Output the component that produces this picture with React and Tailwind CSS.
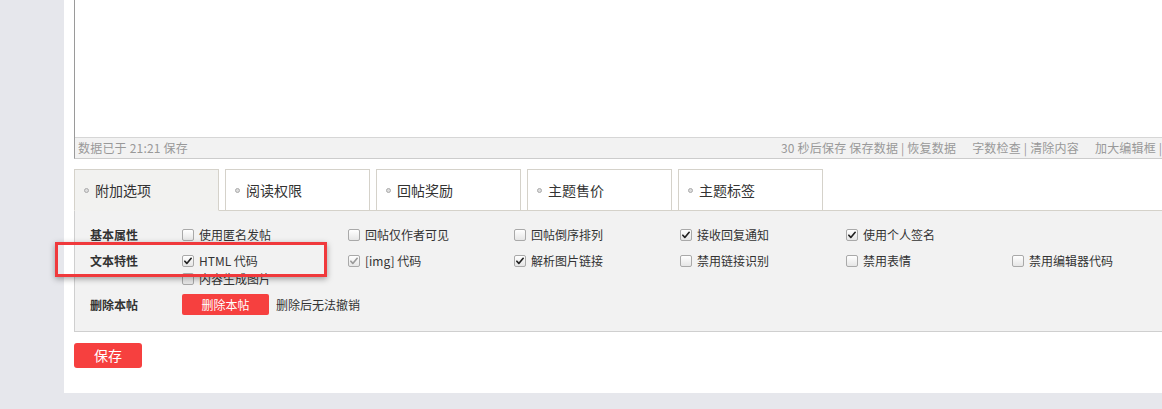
import React from 'react'

const tabs = ['附加选项', '阅读权限', '回帖奖励', '主题售价', '主题标签']

function Check({ checked, disabled }) {
  return (
    <span className="w-[12px] h-[12px] shrink-0 rounded-[2px] border border-[#a9a9a9] bg-gradient-to-b from-white to-[#e6e6e6] flex items-center justify-center mr-[5px]">
      {checked && (
        <svg viewBox="0 0 12 12" className="w-[10px] h-[10px]">
          <path d="M2.2 6.3l2.4 2.6L9.8 2.8" fill="none" stroke={disabled ? '#9a9a9a' : '#222'} strokeWidth="2" strokeLinecap="round" strokeLinejoin="round" />
        </svg>
      )}
    </span>
  )
}

function Opt({ text, checked, disabled }) {
  return (
    <label className="w-[166px] h-[18px] flex items-center text-[12px] text-[#333] leading-[18px]">
      <Check checked={checked} disabled={disabled} />
      <span>{text}</span>
    </label>
  )
}

export default function App() {
  return (
    <div className="w-[1162px] h-[409px] overflow-hidden bg-[#e6e7ec] relative font-['Noto_Sans_CJK_SC','Liberation_Sans',sans-serif]">
      <div className="ml-[64px] w-[1250px] h-[393px] bg-white pl-[10px]">
        {/* Editor */}
        <div className="w-[1200px] border-l border-r border-b border-l-[#9a9a9a] border-r-[#ccc] border-b-[#ccc]">
          <div className="h-[137px] bg-white"></div>
          <div className="h-[21px] bg-[#f2f2f2] border-t border-[#d6d6d6] flex items-center text-[12px] text-[#999] leading-[20px] pl-[3px] tracking-[0.2px]">
            <span className="w-[703px] shrink-0">数据已于 21:21 保存</span>
            <span className="shrink-0">30 秒后保存 保存数据 | 恢复数据</span>
            <span className="shrink-0 ml-[16px]">字数检查 | 清除内容</span>
            <span className="shrink-0 ml-[16px]">加大编辑框 |</span>
          </div>
        </div>

        {/* Tabs */}
        <div className="mt-[10px] flex gap-[6px] relative z-10">
          {tabs.map((t, i) => (
            <div
              key={t}
              className={`w-[145px] h-[42px] border border-[#d5d2ca] flex items-center pl-[9px] text-[14px] text-[#333] ${i === 0 ? 'bg-[#f2f2f0] border-b-[#f2f2f0]' : 'bg-white'}`}
            >
              <span className="w-[5px] h-[5px] rounded-full border border-[#aaa] bg-[#ddd] mr-[6px]"></span>
              {t}
            </div>
          ))}
        </div>

        {/* Options panel */}
        <div className="-mt-px w-[1200px] bg-[#f2f2f2] border border-[#cfcfcf] border-t-[#d5d2ca] pl-[15px] pt-[11px] pb-[14px]">
          <div className="flex py-[4px]">
            <div className="w-[92px] shrink-0 text-[12px] font-bold text-[#333] leading-[18px]">基本属性</div>
            <div className="flex flex-wrap w-[1000px]">
              <Opt text="使用匿名发帖" />
              <Opt text="回帖仅作者可见" />
              <Opt text="回帖倒序排列" />
              <Opt text="接收回复通知" checked />
              <Opt text="使用个人签名" checked />
            </div>
          </div>
          <div className="flex pt-[4px] pb-[2px]">
            <div className="w-[92px] shrink-0 text-[12px] font-bold text-[#333] leading-[18px]">文本特性</div>
            <div className="flex flex-wrap w-[1000px]">
              <Opt text="HTML 代码" checked />
              <Opt text="[img] 代码" checked disabled />
              <Opt text="解析图片链接" checked />
              <Opt text="禁用链接识别" />
              <Opt text="禁用表情" />
              <Opt text="禁用编辑器代码" />
              <Opt text="内容生成图片" />
            </div>
          </div>
          <div className="flex items-center pt-[4px] pb-[2px]">
            <div className="w-[92px] shrink-0 text-[12px] font-bold text-[#333] leading-[18px]">删除本帖</div>
            <button className="w-[87px] h-[21px] bg-[#f6403f] text-white text-[12px] leading-[21px] rounded-[2px]">删除本帖</button>
            <span className="ml-[7px] text-[12px] text-[#333]">删除后无法撤销</span>
          </div>
        </div>

        <button className="mt-[11px] w-[68px] h-[25px] bg-[#f6403f] text-white text-[14px] leading-[25px] rounded-[3px]">保存</button>
      </div>

      {/* highlight annotation */}
      <div className="absolute left-[55px] top-[242px] w-[272px] h-[35px] border-[3px] border-[#f0393c] shadow-[0_2px_6px_rgba(0,0,0,0.35)]"></div>
    </div>
  )
}
